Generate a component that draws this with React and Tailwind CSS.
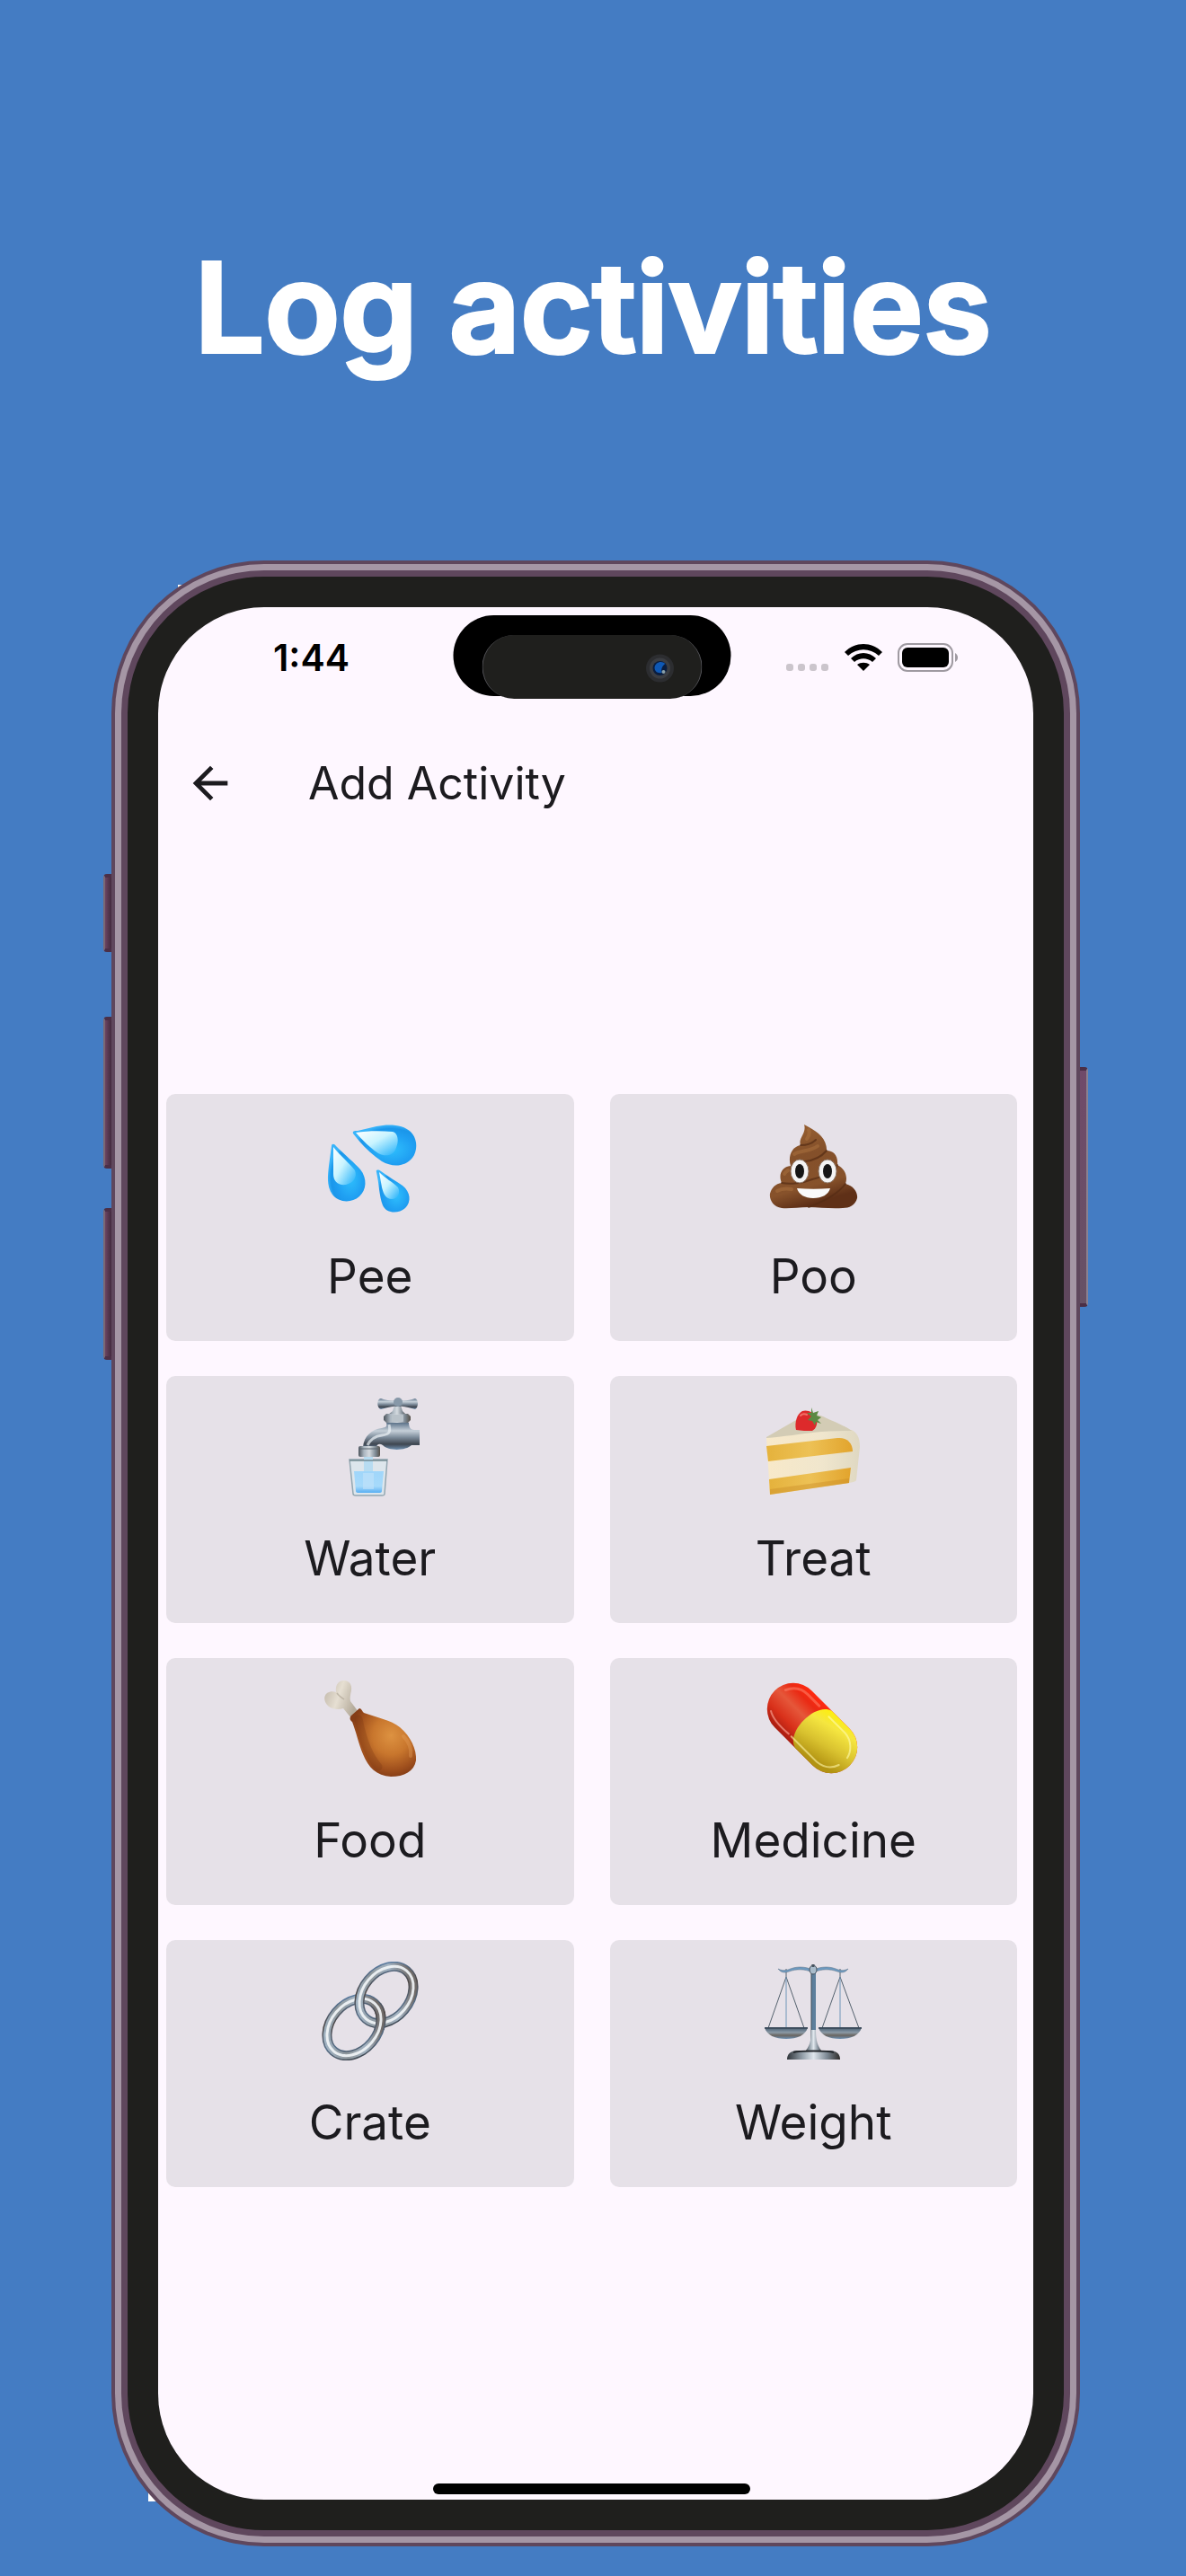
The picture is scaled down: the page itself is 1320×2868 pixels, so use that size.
import React from "react";
import { MdArrowBack } from "react-icons/md";

function PeeIcon() {
  return (
    <svg viewBox="0 0 110 110" className="w-[110px] h-[110px]" aria-hidden="true">
      <defs>
        <radialGradient id="drop" cx="0.6" cy="0.6" r="0.6">
          <stop offset="0" stopColor="#2fc0fd" />
          <stop offset="0.6" stopColor="#1f9ff2" />
          <stop offset="0.85" stopColor="#1a96ea" />
          <stop offset="1" stopColor="#38b4fa" />
        </radialGradient>
        <linearGradient id="dropShine" x1="0" y1="0" x2="0.9" y2="0.9">
          <stop offset="0" stopColor="#ffffff" />
          <stop offset="0.5" stopColor="#c9f4ff" />
          <stop offset="1" stopColor="#3fbcfb" />
        </linearGradient>
      </defs>
      <g fill="url(#drop)">
        <path d="M36 20C35 17 38 17 41 17L62 12C76 9 92 10 100 18C108 26 108 39 102 47C94 57 80 58 68 51C56 43 45 32 36 20Z" />
        <path d="M12 34C12 31 15 31 17 34C27 44 38 53 44 60C52 70 51 83 43 90C34 98 20 97 13 88C6 78 8 66 9 56Z" />
        <path d="M62 63C61 60 64 60 67 62C75 68 84 73 91 78C100 85 101 96 94 103C86 110 73 109 69 100C65 90 65 76 62 63Z" />
      </g>
      <g fill="url(#dropShine)">
        <path d="M39 19C52 17 66 17 80 18C87 20 87 30 83 38C80 45 71 46 64 42C55 36 47 28 39 19Z" />
        <path d="M14 35C22 45 32 53 38 61C41 69 36 75 28 77C19 78 14 73 14 65Z" />
        <path d="M65 63C72 70 80 74 86 80C89 86 86 93 79 93C73 93 70 88 68 80Z" />
      </g>
    </svg>
  );
}

function PooIcon() {
  return (
    <svg viewBox="0 0 110 110" className="w-[110px] h-[110px]" aria-hidden="true">
      <defs>
        <linearGradient id="poo" x1="0" y1="0" x2="0.3" y2="1">
          <stop offset="0" stopColor="#9a6233" />
          <stop offset="0.45" stopColor="#84502a" />
          <stop offset="0.8" stopColor="#87522b" />
          <stop offset="1" stopColor="#5f3017" />
        </linearGradient>
      </defs>
      <path
        d="M45 10C52 14 66 20 69 32C70 35 70 37 70 39C78 39 83 45 82 55C90 59 94 67 91 76C100 78 105 86 104 92C102 100 95 103 88 103C74 104 62 102 50 102C38 102 28 104 20 103C11 102 6 94 7 87C9 80 13 76 20 75C16 66 20 57 30 56C27 47 30 35 41 33C38 25 48 20 45 10Z"
        fill="url(#poo)"
      />
      <g fill="none" stroke="#552c14" strokeLinecap="round" strokeWidth="2" opacity="0.7">
        <path d="M41 33C49 33 54 31 58 27" />
        <path d="M70 39C64 46 55 50 46 51" />
        <path d="M82 55C80 62 70 67 54 71C44 75 30 77 20 75" />
        <path d="M91 76C82 88 66 96 50 102" />
      </g>
      <g fill="none" stroke="#ac7340" strokeLinecap="round" strokeWidth="4" opacity="0.5">
        <path d="M34 43C40 39 52 40 60 34" />
        <path d="M50 16C52 20 50 23 48 26" />
        <path d="M15 84C20 81 26 81 31 82" />
        <path d="M23 65C24 63 26 62 27 61" />
      </g>
      <g fill="#f4f4f4" stroke="#8f7a6c" strokeWidth="1">
        <ellipse cx="40" cy="62" rx="10" ry="13" />
        <ellipse cx="71" cy="62" rx="10" ry="13" />
      </g>
      <g fill="#161616">
        <ellipse cx="40" cy="62" rx="5" ry="8" />
        <ellipse cx="71" cy="62" rx="5" ry="8" />
      </g>
      <path d="M37 81C49 82 62 82 74 81C72 88 65 92 55 92C46 92 39 88 37 81Z" fill="#fafafa" />
    </svg>
  );
}

function WaterIcon() {
  return (
    <svg viewBox="0 0 110 110" className="w-[110px] h-[110px]" aria-hidden="true">
      <defs>
        <linearGradient id="steelV" x1="0" y1="0" x2="0" y2="1">
          <stop offset="0" stopColor="#5c7289" />
          <stop offset="0.3" stopColor="#c6d0d9" />
          <stop offset="0.55" stopColor="#7b8a99" />
          <stop offset="0.8" stopColor="#3f4650" />
          <stop offset="1" stopColor="#6f8fb0" />
        </linearGradient>
        <linearGradient id="steelH" x1="0" y1="0" x2="1" y2="0">
          <stop offset="0" stopColor="#4c545c" />
          <stop offset="0.25" stopColor="#aab5bf" />
          <stop offset="0.5" stopColor="#d5dbe0" />
          <stop offset="0.8" stopColor="#7b8791" />
          <stop offset="1" stopColor="#575048" />
        </linearGradient>
        <linearGradient id="waterFill" x1="0" y1="0" x2="0" y2="1">
          <stop offset="0" stopColor="#a0d6fa" />
          <stop offset="0.7" stopColor="#a6dafb" />
          <stop offset="1" stopColor="#58aef2" />
        </linearGradient>
      </defs>
      <path d="M82 9L89 9L91 15L95 19L75 19L80 15Z" fill="url(#steelH)" />
      <path d="M84 3C79 4 72 3 67 1C62 1 62 12 67 13C73 12 79 9 84 10L88 10C93 9 99 12 105 13C109 11 109 2 105 1C99 3 93 4 88 3Z" fill="url(#steelV)" />
      <circle cx="86" cy="5" r="5" fill="#8798a8" />
      <path d="M73 28L98 28C98 33 100 36 104 36L110 36L110 53L101 53C95 59 76 60 69 53C66 51 63 51 62 55L47 55C48 43 57 35 68 34C73 33 74 32 73 28Z" fill="url(#steelV)" />
      <path d="M76 30C78 39 76 41 68 42C60 43 55 47 52 53" fill="none" stroke="#edf2f6" strokeWidth="3" opacity="0.7" />
      <path d="M73 18L97 18L100 21L100 25L97 28L73 28L70 25L70 21Z" fill="url(#steelH)" />
      <rect x="79" y="19" width="13" height="8" rx="1" fill="#b9c2c9" />
      <rect x="42" y="54" width="24" height="12" rx="2" fill="url(#steelH)" />
      <path d="M42 57H66" stroke="#5a646e" strokeWidth="1" />
      <path d="M32 69H74L71 107C71 109 70 109 68 109H39C37 109 36 108 36 107Z" fill="#d9e7ee" fillOpacity="0.75" stroke="#93a7b1" strokeWidth="1.5" />
      <path d="M48 66H58V83H48Z" fill="#b7dcf1" />
      <path d="M37 82H70L68 104C68 106 66 106 64 106H43C41 106 39 106 39 104Z" fill="url(#waterFill)" />
      <path d="M47 84H59V102H47Z" fill="#c3e2fa" opacity="0.6" />
      <path d="M32 70H74" stroke="#718891" strokeWidth="1.5" />
    </svg>
  );
}

function TreatIcon() {
  return (
    <svg viewBox="0 0 110 110" className="w-[110px] h-[110px]" aria-hidden="true">
      <defs>
        <linearGradient id="sponge" x1="0" y1="0" x2="1" y2="0">
          <stop offset="0" stopColor="#e5b23c" />
          <stop offset="0.5" stopColor="#edc155" />
          <stop offset="1" stopColor="#e2a42d" />
        </linearGradient>
        <linearGradient id="cream" x1="0" y1="0" x2="1" y2="0">
          <stop offset="0" stopColor="#f8e9c9" />
          <stop offset="0.6" stopColor="#f0e6cd" />
          <stop offset="1" stopColor="#dfd8c2" />
        </linearGradient>
      </defs>
      <path d="M3 45L60 36L98 36C106 40 107 48 107 55L103 92C102 94 98 94 95 95L7 108Z" fill="url(#cream)" />
      <path d="M3 44L36 25C46 19 58 17 66 21C78 27 90 31 98 37C88 37 76 37 64 38C43 40 20 44 3 45Z" fill="#d3ccb5" />
      <path d="M3 54L82 45C92 44 99 50 99 60L5 71Z" fill="url(#sponge)" />
      <path d="M6 91L97 78L95 95L7 108Z" fill="url(#sponge)" />
      <path d="M7 102L95 90L95 95L7 108Z" fill="#c88a25" opacity="0.4" />
      <path d="M36 36C34 28 37 18 43 15C49 13 56 17 59 22C60 29 59 34 54 37C48 37 42 37 36 36Z" fill="#dd2a2b" />
      <path d="M41 20C43 18 46 18 48 19" fill="none" stroke="#f27068" strokeWidth="2" strokeLinecap="round" />
      <path d="M53 11L55 17L61 15L59 20L64 22L60 25L64 29L58 27L57 31L54 26L49 25L53 21L48 17L53 17Z" fill="#5c8a43" />
    </svg>
  );
}

function FoodIcon() {
  return (
    <svg viewBox="0 0 110 110" className="w-[110px] h-[110px]" aria-hidden="true">
      <defs>
        <radialGradient id="meat" cx="0.62" cy="0.4" r="0.62">
          <stop offset="0" stopColor="#dd9241" />
          <stop offset="0.45" stopColor="#c8762d" />
          <stop offset="0.8" stopColor="#a0501d" />
          <stop offset="1" stopColor="#843c16" />
        </radialGradient>
        <linearGradient id="bone" x1="0" y1="0" x2="1" y2="0.4">
          <stop offset="0" stopColor="#bdb3a5" />
          <stop offset="0.5" stopColor="#e6dfd2" />
          <stop offset="1" stopColor="#b5ab9b" />
        </linearGradient>
      </defs>
      <path d="M17 14C16 5 20 1 26 1C32 1 35 6 34 12C33 17 32 21 33 24L42 36L34 43L25 32C20 34 13 33 9 30C3 25 3 18 7 15C10 13 14 13 17 14Z" fill="url(#bone)" />
      <path d="M18 15C20 18 23 20 26 22" fill="none" stroke="#a99e8d" strokeWidth="1.5" opacity="0.6" />
      <path d="M43 32C45 32 46 35 48 37C62 42 78 45 88 53C100 63 107 78 106 90C104 102 93 108 78 108C62 107 53 98 47 83C42 71 39 57 35 47C32 45 32 42 34 40Z" fill="url(#meat)" />
      <path d="M42 44C46 64 52 84 64 97" fill="none" stroke="#6f2f10" strokeWidth="9" strokeLinecap="round" opacity="0.25" />
      <path d="M92 63C99 70 101 78 100 85" fill="none" stroke="#e9a35f" strokeWidth="4" strokeLinecap="round" opacity="0.35" />
    </svg>
  );
}

function MedicineIcon() {
  return (
    <svg viewBox="0 0 110 110" className="w-[110px] h-[110px]" aria-hidden="true">
      <defs>
        <linearGradient id="pillRed" x1="0" y1="0" x2="0" y2="1">
          <stop offset="0" stopColor="#ff2a10" />
          <stop offset="0.2" stopColor="#ea2a14" />
          <stop offset="0.45" stopColor="#e5573a" />
          <stop offset="0.75" stopColor="#d9301a" />
          <stop offset="1" stopColor="#a81c10" />
        </linearGradient>
        <linearGradient id="pillYellow" x1="0" y1="0" x2="0.3" y2="1">
          <stop offset="0" stopColor="#fff100" />
          <stop offset="0.3" stopColor="#f5e640" />
          <stop offset="0.65" stopColor="#d9c22f" />
          <stop offset="1" stopColor="#b29312" />
        </linearGradient>
      </defs>
      <g transform="rotate(45 54 54)">
        <rect x="-5" y="25" width="118" height="58" rx="29" fill="url(#pillRed)" />
        <path d="M56 25H84A29 29 0 0 1 84 83H56C36 78 36 30 56 25Z" fill="url(#pillYellow)" />
        <path d="M8 73C16 78 28 78 40 77" fill="none" stroke="#f79a8a" strokeWidth="2" strokeLinecap="round" opacity="0.7" />
        <path d="M44 77H84C94 76 101 71 104 62" fill="none" stroke="#fff6a8" strokeWidth="2" strokeLinecap="round" opacity="0.6" />
        <path d="M3 45C7 36 14 31 24 31H42" fill="none" stroke="#ff8a72" strokeWidth="3" strokeLinecap="round" opacity="0.5" />
        <path d="M58 32H84C95 33 103 41 105 50" fill="none" stroke="#fffbb0" strokeWidth="2" strokeLinecap="round" opacity="0.6" />
      </g>
    </svg>
  );
}

// one chain link: dark rim, steel body, bright highlight
function ChainLink({ cx, cy }) {
  return (
    <g fill="none" transform={`rotate(-50 ${cx} ${cy})`}>
      <ellipse cx={cx} cy={cy} rx="35" ry="26" stroke="url(#chainRim)" strokeWidth="11" />
      <ellipse cx={cx} cy={cy} rx="35" ry="26" stroke="url(#chainBody)" strokeWidth="8" />
      <ellipse cx={cx} cy={cy} rx="35" ry="26" stroke="#f3f6f8" strokeWidth="3" opacity="0.9" />
    </g>
  );
}

function CrateIcon() {
  return (
    <svg viewBox="0 0 110 110" className="w-[110px] h-[110px]" aria-hidden="true">
      <defs>
        <linearGradient id="chainRim" x1="1" y1="0" x2="0" y2="1">
          <stop offset="0" stopColor="#5d89b8" />
          <stop offset="0.4" stopColor="#4b4544" />
          <stop offset="0.7" stopColor="#58708a" />
          <stop offset="1" stopColor="#35373a" />
        </linearGradient>
        <linearGradient id="chainBody" x1="0" y1="0" x2="1" y2="0.6">
          <stop offset="0" stopColor="#a9bfd3" />
          <stop offset="0.4" stopColor="#8c9499" />
          <stop offset="0.7" stopColor="#a3b3c2" />
          <stop offset="1" stopColor="#6f6a68" />
        </linearGradient>
        <clipPath id="linkOver">
          <rect x="56" y="46" width="26" height="30" />
        </clipPath>
      </defs>
      <ChainLink cx={37} cy={73} />
      <ChainLink cx={73} cy={37} />
      <g clipPath="url(#linkOver)">
        <ChainLink cx={37} cy={73} />
      </g>
    </svg>
  );
}

function WeightIcon() {
  return (
    <svg viewBox="0 0 110 110" className="w-[110px] h-[110px]" aria-hidden="true">
      <defs>
        <linearGradient id="pan" x1="0" y1="0" x2="0" y2="1">
          <stop offset="0" stopColor="#3e5469" />
          <stop offset="0.45" stopColor="#8b9aa6" />
          <stop offset="0.7" stopColor="#6a6560" />
          <stop offset="1" stopColor="#6b8fb2" />
        </linearGradient>
        <linearGradient id="base" x1="0" y1="0" x2="1" y2="0">
          <stop offset="0" stopColor="#2e3338" />
          <stop offset="0.3" stopColor="#97a3ad" />
          <stop offset="0.5" stopColor="#dfe6ec" />
          <stop offset="0.75" stopColor="#7e8a95" />
          <stop offset="1" stopColor="#2d2a28" />
        </linearGradient>
      </defs>
      <g fill="none" stroke="#55626e" strokeWidth="1">
        <path d="M25 8V17L5 74M25 17L45 74" />
        <path d="M85 8V17L65 74M85 17L106 74" />
        <path d="M25 17V74M85 17V74" stroke="#6f95b8" />
      </g>
      <path d="M16 8C20 10 23 10 27 9C36 5 45 5 55 9C65 5 74 5 83 9C87 10 90 10 94 8C91 12 87 13 82 11C73 8 65 8 55 12C45 8 37 8 28 11C23 13 19 12 16 8Z" fill="#6d9ac0" stroke="#5a7184" strokeWidth="0.5" />
      <rect x="53" y="12" width="5" height="76" fill="#5d7f9c" />
      <path d="M53 12V88" stroke="#3f4d59" strokeWidth="1" />
      <path d="M53 76H58C58 88 60 95 66 101H45C51 95 53 88 53 76Z" fill="url(#base)" />
      <ellipse cx="55" cy="9" rx="4" ry="5" fill="#a9bccb" stroke="#46535e" strokeWidth="1" />
      <path d="M55 3V6" stroke="#46535e" strokeWidth="3" />
      <path d="M1 73H49C47 82 37 86 25 86C13 86 3 82 1 73Z" fill="url(#pan)" />
      <path d="M61 73H109C107 82 97 86 85 86C73 86 63 82 61 73Z" fill="url(#pan)" />
      <path d="M1 74H49M61 74H109" stroke="#394755" strokeWidth="1.5" />
      <path d="M26 109C26 102 31 99 38 99H73C80 99 85 102 85 109Z" fill="url(#base)" />
      <path d="M33 101C40 99 71 99 78 101" fill="none" stroke="#22262a" strokeWidth="2" />
    </svg>
  );
}

const activities = [
  { name: "Pee", Icon: PeeIcon },
  { name: "Poo", Icon: PooIcon },
  { name: "Water", Icon: WaterIcon },
  { name: "Treat", Icon: TreatIcon },
  { name: "Food", Icon: FoodIcon },
  { name: "Medicine", Icon: MedicineIcon },
  { name: "Crate", Icon: CrateIcon },
  { name: "Weight", Icon: WeightIcon },
];

function StatusBar() {
  return (
    <div className="relative flex items-center justify-between h-28 pl-32 pr-[74px] text-black">
      <span className="text-[41px] leading-[48px] font-semibold">1:44</span>

      {/* Dynamic island */}
      <div className="absolute left-1/2 top-[9px] -translate-x-1/2 w-[309px] h-[90px] rounded-[45px] bg-black">
        <div className="absolute left-8 top-[22px] w-[245px] h-[71px] rounded-[36px] bg-[#1f1f1d] border-x border-[#55555a]">
          <svg viewBox="0 0 32 32" className="absolute right-[30px] top-[21px] w-8 h-8" aria-hidden="true">
            <circle cx="16" cy="16" r="15.5" fill="#2c2d30" />
            <circle cx="16" cy="16" r="11.5" fill="#3b3d42" />
            <circle cx="16" cy="16" r="8" fill="#0a1d3f" />
            <path d="M10 15C11 9 18 7 22 11C19 13 17 16 18 21C13 22 10 19 10 15Z" fill="#0f58b4" />
            <circle cx="20" cy="20" r="2" fill="#8ba0a8" />
          </svg>
        </div>
      </div>

      <div className="flex items-center">
        <div className="flex gap-[5px] mt-[21px] mr-[18px]">
          <span className="w-2 h-2 rounded-[3px] bg-[#cbc5cc]" />
          <span className="w-2 h-2 rounded-[3px] bg-[#cbc5cc]" />
          <span className="w-2 h-2 rounded-[3px] bg-[#cbc5cc]" />
          <span className="w-2 h-2 rounded-[3px] bg-[#cbc5cc]" />
        </div>
        <svg viewBox="0 0 42 30" className="w-[42px] h-[30px] mr-[17px]" aria-hidden="true">
          <path d="M0 9C12 -3 30 -3 42 9L38 13C28 4 14 4 4 13Z" />
          <path d="M7 16C15 8 27 8 35 16L31 20C25 15 17 15 11 20Z" />
          <path d="M14 23C18 20 24 20 28 23L21 30Z" />
        </svg>
        <svg viewBox="0 0 68 32" className="w-[68px] h-8" aria-hidden="true">
          <rect x="1" y="1" width="60" height="30" rx="10" fill="none" stroke="#9f9aa1" strokeWidth="2" />
          <rect x="5" y="5" width="52" height="22" rx="6" />
          <path d="M64 11C68 13 68 19 64 21Z" fill="#9f9aa1" />
        </svg>
      </div>
    </div>
  );
}

function ActivityCard({ name, Icon }) {
  return (
    <button
      type="button"
      className="flex flex-col items-center pt-6 pb-10 rounded-[10px] bg-[#e6e1e8] cursor-pointer"
    >
      <Icon />
      <span className="mt-[37px] text-[53px] leading-[64px] text-[#1c1b1f]">{name}</span>
    </button>
  );
}

function App() {
  return (
    <div className="min-h-screen flex flex-col pb-[33px] bg-[#447cc3] font-['Inter',sans-serif]">
      <h1 className="pt-[262px] pb-[202px] text-center text-[138px] leading-[160px] font-semibold text-white [-webkit-text-stroke:4px_white] [stroke-linejoin:round]">
        Log activities
      </h1>

      {/* Phone */}
      <div className="relative flex-1 flex flex-col ml-[124px] mr-[118px] p-[18px]">
        <div className="absolute left-[74px] top-[27px] w-2 h-2 bg-white" />
        <div className="absolute left-[41px] bottom-[50px] w-3 h-3 bg-white" />

        {/* Side buttons */}
        <div className="absolute -left-[9px] top-[349px] w-[10px] h-[87px] rounded-l-sm border-l-2 border-y-4 border-l-[#7b6873] border-y-[#4b2f47] bg-linear-to-r from-[#6b4563] to-[#3d2638]" />
        <div className="absolute -left-[9px] top-[508px] w-[10px] h-[169px] rounded-l-sm border-l-2 border-y-4 border-l-[#7b6873] border-y-[#4b2f47] bg-linear-to-r from-[#6b4563] to-[#3d2638]" />
        <div className="absolute -left-[9px] top-[721px] w-[10px] h-[169px] rounded-l-sm border-l-2 border-y-4 border-l-[#7b6873] border-y-[#4b2f47] bg-linear-to-r from-[#6b4563] to-[#3d2638]" />
        <div className="absolute -right-[9px] top-[564px] w-[10px] h-[267px] rounded-r-sm border-r-2 border-y-4 border-r-[#8b8190] border-y-[#4b2f47] bg-linear-to-b from-[#704a69] to-[#665165]" />

        <div className="relative flex-1 flex flex-col border-[34px] border-[#1f1f1d] rounded-[152px] bg-[#1f1f1d] shadow-[0_0_0_7px_#5f475d,0_0_0_14px_#a596a5,0_0_0_18px_#5f475d]">
          <div className="flex-1 flex flex-col pr-[9px] rounded-[118px] bg-[#fef7ff]">
            <StatusBar />

            <header className="flex items-center h-[168px] pl-[29px]">
              <button type="button" aria-label="Back" className="text-[58px] text-[#1c1b1f] cursor-pointer">
                <MdArrowBack />
              </button>
              <h2 className="ml-20 text-[50px] leading-[58px] text-[#1c1b1f]">Add Activity</h2>
            </header>

            <main className="flex-1 flex flex-col justify-center px-[9px]">
              <div className="grid grid-cols-2 gap-x-10 gap-y-[39px]">
                {activities.map((activity) => (
                  <ActivityCard key={activity.name} name={activity.name} Icon={activity.Icon} />
                ))}
              </div>
            </main>

            {/* Home indicator */}
            <div className="flex items-end justify-center h-[86px] pb-[6px]">
              <div className="w-[353px] h-3 rounded-full bg-black" />
            </div>
          </div>
        </div>
      </div>
    </div>
  );
}

export default App;
